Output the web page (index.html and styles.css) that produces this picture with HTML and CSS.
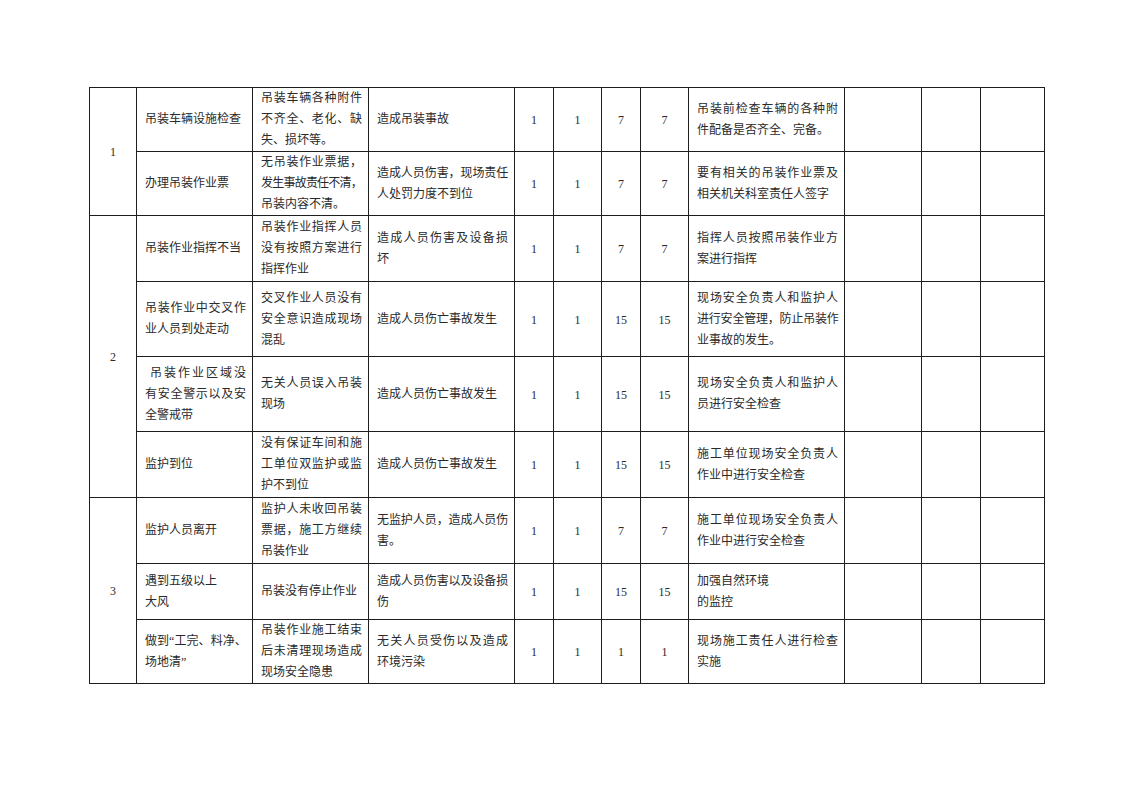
FILE: index.html
```html
<!DOCTYPE html>
<html lang="zh-CN">
<head>
<meta charset="utf-8">
<title>吊装作业风险评价</title>
<link rel="stylesheet" href="styles.css">
</head>
<body>
<div class="page">
<table class="risk">
<colgroup>
<col class="c1"><col class="c2"><col class="c3"><col class="c4">
<col class="c5"><col class="c6"><col class="c7"><col class="c8">
<col class="c9"><col class="c10"><col class="c11"><col class="c12">
</colgroup>
<tbody>
<tr class="r1">
<td class="no" rowspan="2">1</td>
<td class="tx"><span class="l">吊装车辆设施检查</span></td>
<td class="tx"><span class="l j">吊装车辆各种附件</span><span class="l j">不齐全、老化、缺</span><span class="l">失、损坏等。</span></td>
<td class="tx"><span class="l">造成吊装事故</span></td>
<td class="no">1</td><td class="no">1</td><td class="no">7</td><td class="no">7</td>
<td class="tx"><span class="l j">吊装前检查车辆的各种附</span><span class="l">件配备是否齐全、完备。</span></td>
<td></td><td></td><td></td>
</tr>
<tr class="r2">
<td class="tx"><span class="l">办理吊装作业票</span></td>
<td class="tx"><span class="l j">无吊装作业票据，</span><span class="l j sq">发生事故责任不清，</span><span class="l">吊装内容不清。</span></td>
<td class="tx"><span class="l j sq2">造成人员伤害，现场责任</span><span class="l">人处罚力度不到位</span></td>
<td class="no">1</td><td class="no">1</td><td class="no">7</td><td class="no">7</td>
<td class="tx"><span class="l j">要有相关的吊装作业票及</span><span class="l">相关机关科室责任人签字</span></td>
<td></td><td></td><td></td>
</tr>
<tr class="r3">
<td class="no" rowspan="4">2</td>
<td class="tx"><span class="l">吊装作业指挥不当</span></td>
<td class="tx"><span class="l j">吊装作业指挥人员</span><span class="l j">没有按照方案进行</span><span class="l">指挥作业</span></td>
<td class="tx"><span class="l j">造成人员伤害及设备损</span><span class="l">坏</span></td>
<td class="no">1</td><td class="no">1</td><td class="no">7</td><td class="no">7</td>
<td class="tx"><span class="l j">指挥人员按照吊装作业方</span><span class="l">案进行指挥</span></td>
<td></td><td></td><td></td>
</tr>
<tr class="r4">
<td class="tx"><span class="l j">吊装作业中交叉作</span><span class="l">业人员到处走动</span></td>
<td class="tx"><span class="l j">交叉作业人员没有</span><span class="l j">安全意识造成现场</span><span class="l">混乱</span></td>
<td class="tx"><span class="l">造成人员伤亡事故发生</span></td>
<td class="no">1</td><td class="no">1</td><td class="no">15</td><td class="no">15</td>
<td class="tx"><span class="l j">现场安全负责人和监护人</span><span class="l j sq">进行安全管理，防止吊装作</span><span class="l">业事故的发生。</span></td>
<td></td><td></td><td></td>
</tr>
<tr class="r5">
<td class="tx"><span class="l j ind">吊装作业区域没</span><span class="l j">有安全警示以及安</span><span class="l">全警戒带</span></td>
<td class="tx"><span class="l j">无关人员误入吊装</span><span class="l">现场</span></td>
<td class="tx"><span class="l">造成人员伤亡事故发生</span></td>
<td class="no">1</td><td class="no">1</td><td class="no">15</td><td class="no">15</td>
<td class="tx"><span class="l j">现场安全负责人和监护人</span><span class="l">员进行安全检查</span></td>
<td></td><td></td><td></td>
</tr>
<tr class="r6">
<td class="tx"><span class="l">监护到位</span></td>
<td class="tx"><span class="l j">没有保证车间和施</span><span class="l j">工单位双监护或监</span><span class="l">护不到位</span></td>
<td class="tx"><span class="l">造成人员伤亡事故发生</span></td>
<td class="no">1</td><td class="no">1</td><td class="no">15</td><td class="no">15</td>
<td class="tx"><span class="l j">施工单位现场安全负责人</span><span class="l">作业中进行安全检查</span></td>
<td></td><td></td><td></td>
</tr>
<tr class="r7">
<td class="no" rowspan="3">3</td>
<td class="tx"><span class="l">监护人员离开</span></td>
<td class="tx"><span class="l j">监护人未收回吊装</span><span class="l j">票据，施工方继续</span><span class="l">吊装作业</span></td>
<td class="tx"><span class="l j sq2">无监护人员，造成人员伤</span><span class="l">害。</span></td>
<td class="no">1</td><td class="no">1</td><td class="no">7</td><td class="no">7</td>
<td class="tx"><span class="l j">施工单位现场安全负责人</span><span class="l">作业中进行安全检查</span></td>
<td></td><td></td><td></td>
</tr>
<tr class="r8">
<td class="tx"><span class="l">遇到五级以上</span><span class="l">大风</span></td>
<td class="tx"><span class="l">吊装没有停止作业</span></td>
<td class="tx"><span class="l j sq2">造成人员伤害以及设备损</span><span class="l">伤</span></td>
<td class="no">1</td><td class="no">1</td><td class="no">15</td><td class="no">15</td>
<td class="tx"><span class="l">加强自然环境</span><span class="l">的监控</span></td>
<td></td><td></td><td></td>
</tr>
<tr class="r9">
<td class="tx"><span class="l j sq">做到“工完、料净、</span><span class="l">场地清”</span></td>
<td class="tx"><span class="l j">吊装作业施工结束</span><span class="l j">后未清理现场造成</span><span class="l">现场安全隐患</span></td>
<td class="tx"><span class="l j">无关人员受伤以及造成</span><span class="l">环境污染</span></td>
<td class="no">1</td><td class="no">1</td><td class="no">1</td><td class="no">1</td>
<td class="tx"><span class="l j">现场施工责任人进行检查</span><span class="l">实施</span></td>
<td></td><td></td><td></td>
</tr>
</tbody>
</table>
</div>
</body>
</html>
```
FILE: styles.css
```css
html, body {
  margin: 0;
  padding: 0;
  background: #fff;
}
.page {
  padding: 87px 0 0 89px;
  font-family: "Liberation Serif", "Noto Sans CJK SC", serif;
  font-size: 12px;
  color: #2a2a2a;
}
.risk {
  border-collapse: collapse;
  table-layout: fixed;
  width: 955px;
}
.risk td {
  border: 1px solid #1e1e1e;
  padding: 0 6px 0 8px;
  vertical-align: middle;
  line-height: 21px;
}
.c1 { width: 47px; }
.c2 { width: 116px; }
.c3 { width: 116px; }
.c4 { width: 146px; }
.c5 { width: 39px; }
.c6 { width: 48px; }
.c7 { width: 39px; }
.c8 { width: 48px; }
.c9 { width: 156px; }
.c10 { width: 77px; }
.c11 { width: 59px; }
.c12 { width: 64px; }
.risk td.no {
  text-align: center;
  padding: 2px 0 0 0;
}
.r1 { height: 64px; }
.r2 { height: 63px; }
.r3 { height: 66px; }
.r4 { height: 75px; }
.r5 { height: 75px; }
.r6 { height: 66px; }
.r7 { height: 66px; }
.r8 { height: 56px; }
.r9 { height: 64px; }
.l {
  display: block;
  white-space: nowrap;
  text-align: left;
}
.j {
  text-align: justify;
  text-align-last: justify;
}
.sq { letter-spacing: -0.8px; }
.sq2 { letter-spacing: -0.3px; }
.ind { padding-left: 5px; }
```
